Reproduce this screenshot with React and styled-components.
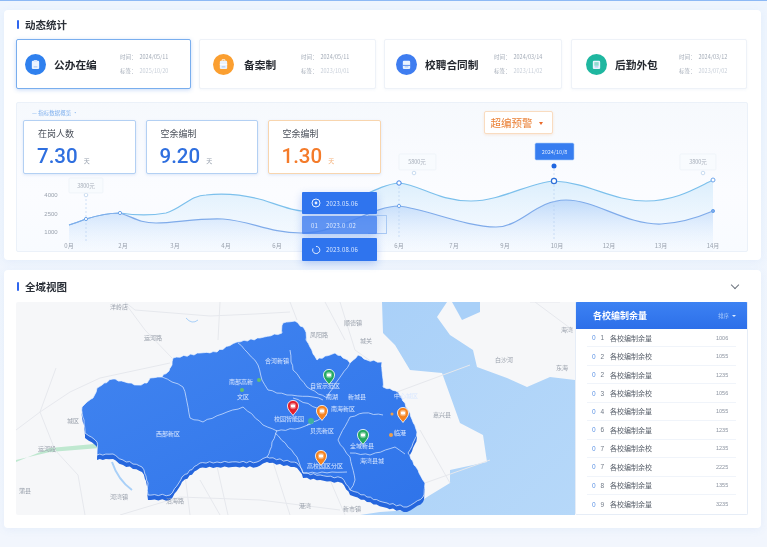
import React from 'react';
import styled, { createGlobalStyle } from 'styled-components';

const GlobalStyle = createGlobalStyle`
  html, body { margin: 0; padding: 0; background: #eff5fd; }
  body { font-family: "Noto Sans CJK SC", "Liberation Sans", sans-serif; color: #262b33; }
`;

const Page = styled.div`
  width: 767px;
  height: 547px;
  box-sizing: border-box;
  overflow: hidden;
  padding: 9px 6px 0 4px;
  border-top: 1px solid #8db9f5;
  background: linear-gradient(180deg, #eef5fe, #f2f6fd);
  display: flex;
  flex-direction: column;
  gap: 10px;
  filter: blur(0.3px);
`;

const Card = styled.section`
  position: relative;
  box-sizing: border-box;
  height: ${p => p.$height}px;
  background: #fff;
  border-radius: 4px;
  padding: 0 13px 0 12px;
  box-shadow: 0 2px 8px rgba(90, 140, 220, 0.08);
`;

const TitleRow = styled.div`
  height: ${p => p.$height}px;
  display: flex;
  align-items: center;
  justify-content: space-between;
  padding-left: 1px;
`;

const Title = styled.h2`
  margin: 0;
  font-size: 10.5px;
  font-weight: 700;
  color: #2b3038;
  display: flex;
  align-items: center;
  gap: 6px;
  &::before {
    content: '';
    width: 2px;
    height: 9px;
    background: #2f66ee;
    border-radius: 1px;
  }
`;

const Tabs = styled.div`
  display: grid;
  grid-template-columns: 175px 177px 178px 177px;
  column-gap: 8px;
  & > :last-child { margin-left: 1px; }
`;

const Tab = styled.div`
  box-sizing: border-box;
  height: 50px;
  display: flex;
  align-items: center;
  padding-left: ${p => p.$pad}px;
  background: #fff;
  border-radius: 2px;
  border: 1px solid ${p => (p.$active ? '#79aeee' : '#eef2f8')};
  box-shadow: ${p => (p.$active ? '0 1px 4px rgba(70,130,230,.3)' : '0 1px 3px rgba(120,150,200,.08)')};
`;

const TabIcon = styled.span`
  flex: none;
  width: 21px;
  height: 21px;
  border-radius: 50%;
  background: ${p => p.$color};
  display: flex;
  align-items: center;
  justify-content: center;
`;

const TabName = styled.span`
  margin-left: ${p => p.$gap}px;
  font-size: 10.7px;
  font-weight: 700;
  color: #24282f;
  white-space: nowrap;
  width: ${p => p.$width}px;
`;

const TabMeta = styled.div`
  display: flex;
  flex-direction: column;
  gap: 8px;
  font-size: 5.5px;
  line-height: 6px;
  color: #a4acb8;
  white-space: nowrap;
  span:last-child { color: #c9d0da; }
  b { font-weight: 400; color: #a4acb8; margin-right: 3px; }
`;

const ChartPanel = styled.div`
  position: relative;
  box-sizing: border-box;
  height: 150px;
  margin-top: 13px;
  padding: 6px 6px 0;
  border: 1px solid #ebf1f9;
  border-radius: 2px;
  background: linear-gradient(180deg, #f6f9fd, #fbfcff 60%, #f8fbff);
`;

const ChartTop = styled.div`
  position: relative;
  z-index: 1;
  display: flex;
  align-items: flex-start;
`;

const Caption = styled.div`
  height: 11px;
  padding-left: 9px;
  font-size: 5.5px;
  line-height: 9px;
  color: #7fb0ee;
  white-space: nowrap;
`;

const Stats = styled.div`
  display: flex;
  gap: 9.5px;
`;

const Stat = styled.div`
  box-sizing: border-box;
  width: ${p => p.$width}px;
  height: 54px;
  padding: 6px 0 0 14px;
  background: #fff;
  border-radius: 2px;
  border: 1px solid ${p => (p.$warn ? '#f8d5ae' : '#b3d0f3')};
  box-shadow: 0 1px 3px rgba(90, 140, 220, 0.18);
`;

const StatLabel = styled.div`
  font-size: 9px;
  line-height: 14px;
  color: #4b515b;
`;

const StatValue = styled.div`
  margin-top: 3px;
  margin-left: -1px;
  font-family: Roboto, "Liberation Sans", sans-serif;
  font-size: 20.5px;
  line-height: 24px;
  font-weight: 500;
  color: ${p => (p.$warn ? '#f47b2a' : '#2f6fdf')};
  small {
    font-family: "Noto Sans CJK SC", sans-serif;
    font-size: 6px;
    font-weight: 400;
    margin-left: 6px;
    color: ${p => (p.$warn ? '#f4b37e' : '#9aa3b0')};
  }
`;

const WarnButton = styled.div`
  box-sizing: border-box;
  width: 69px;
  height: 23px;
  margin: 2px 0 0 103px;
  display: flex;
  align-items: center;
  justify-content: space-between;
  padding: 0 9px 0 6px;
  background: #fff;
  border: 1px solid #f9dcc0;
  border-radius: 2px;
  box-shadow: 0 1px 3px rgba(240, 160, 90, 0.2);
  font-size: 10.5px;
  color: #ea8036;
  white-space: nowrap;
  &::after {
    content: '';
    border: 2.5px solid transparent;
    border-top: 3px solid #ea6a2a;
    margin-top: 3px;
  }
`;

const ChartSvg = styled.svg`
  position: absolute;
  left: 0;
  top: 0;
  width: 732px;
  height: 150px;
`;

const TimeStack = styled.div`
  position: absolute;
  z-index: 2;
  left: 285px;
  top: 89px;
  width: 75px;
  display: flex;
  flex-direction: column;
`;

const TimeRow = styled.div`
  box-sizing: border-box;
  height: ${p => p.$height}px;
  margin-top: ${p => p.$gap}px;
  display: flex;
  align-items: center;
  padding-left: 9px;
  border-radius: 1px;
  background: ${p => (p.$light ? 'rgba(70, 130, 240, 0.85)' : '#2f74ee')};
  box-shadow: 0 3px 8px rgba(50, 110, 230, 0.3);
  color: #dce9ff;
  font-size: 6px;
  letter-spacing: 0.2px;
  white-space: nowrap;
`;

const TimeIcon = styled.span`
  width: 15px;
  flex: none;
  display: flex;
  align-items: center;
`;

const GhostBox = styled.div`
  position: absolute;
  z-index: 1;
  left: 351px;
  top: 112px;
  width: 19px;
  height: 19px;
  box-sizing: border-box;
  border: 1px solid #a9c9f3;
  border-left: 0;
`;

const MapRow = styled.div`
  display: flex;
  height: 213px;
`;

const MapBox = styled.div`
  width: 559px;
  flex: none;
  background: #f6f7f9;
  border-radius: 2px 0 0 2px;
  overflow: hidden;
`;

const MapSvg = styled.svg`
  display: block;
  width: 559px;
  height: 213px;
`;

const ListPanel = styled.div`
  flex: 1;
  border: 1px solid #e6edf7;
  border-top: 0;
  border-radius: 0 0 2px 2px;
  background: #fff;
  overflow: hidden;
`;

const ListHead = styled.div`
  height: 27px;
  margin: 0 -1px;
  display: flex;
  align-items: center;
  justify-content: space-between;
  padding: 0 12px 0 18px;
  background: linear-gradient(180deg, #3c82f3, #2d6fe9);
  border-radius: 2px 2px 0 0;
  color: #fff;
  font-size: 9px;
  font-weight: 700;
  span {
    display: flex;
    align-items: center;
    gap: 3px;
    font-size: 5.5px;
    font-weight: 400;
    color: #a9cbfb;
  }
  span::after {
    content: '';
    border: 2px solid transparent;
    border-top: 2.5px solid #dcebff;
    margin-top: 2px;
  }
`;

const ListRow = styled.div`
  box-sizing: border-box;
  height: 18.45px;
  margin: 0 11px;
  display: flex;
  align-items: center;
  border-bottom: 1px solid #f0f4fa;
  &:last-child { border-bottom: 0; }
`;

const RowIndex = styled.span`
  width: 23px;
  padding-left: 5px;
  box-sizing: border-box;
  font-family: "Liberation Sans", sans-serif;
  font-size: 6.5px;
  letter-spacing: 1.5px;
  color: #6f7885;
  b { font-weight: 400; color: #5c92e4; }
`;

const RowName = styled.span`
  flex: 1;
  font-size: 7px;
  color: #555c67;
`;

const RowValue = styled.span`
  width: 20px;
  font-family: "Liberation Sans", sans-serif;
  font-size: 5.5px;
  color: #8b93a0;
`;

const Chevron = styled.span`
  width: 5px;
  height: 5px;
  margin: -3px 10px 0 0;
  border-right: 1.2px solid #6d747f;
  border-bottom: 1.2px solid #6d747f;
  transform: rotate(45deg);
`;

const tabs = [
  { name: '公办在编', color: '#2f80ee', pad: 8, gap: 8, width: 66, time: '2024/05/11', date: '2025/10/20', glyph: 'clip' },
  { name: '备案制', color: '#fb9f30', pad: 13, gap: 10, width: 57, time: '2024/05/11', date: '2023/10/01', glyph: 'case' },
  { name: '校聘合同制', color: '#3f7df0', pad: 11, gap: 8, width: 69, time: '2024/03/14', date: '2023/11/02', glyph: 'card' },
  { name: '后勤外包', color: '#1fb7a0', pad: 14, gap: 8, width: 64, time: '2024/03/12', date: '2023/07/02', glyph: 'book' },
];

const stats = [
  { label: '在岗人数', value: '7.30', width: 113 },
  { label: '空余编制', value: '9.20', width: 112.5 },
  { label: '空余编制', value: '1.30', width: 113, warn: true },
];

const months = [
  ['0月', 68], ['2月', 122], ['3月', 174], ['4月', 225], ['6月', 276], ['6月', 398],
  ['7月', 453], ['9月', 504], ['10月', 556], ['12月', 608], ['13月', 660], ['14月', 712],
];

const rows = [
  ['0', '1', '各校编制余量', '1006'], ['0', '2', '各校编制余校', '1055'], ['0', '2', '各校编制余量', '1235'],
  ['0', '3', '各校编制余校', '1056'], ['0', '4', '各校编制余量', '1055'], ['0', '6', '各校编制余量', '1235'],
  ['0', '7', '各校编制余校', '1235'], ['0', '7', '各校编制余校', '2225'], ['0', '8', '各校编制余量', '1355'],
  ['0', '9', '各校编制余量', '3235'],
];

const UPPER = 'M68 224 C78 221 84 218 85 218 C98 214 108 212 119 212 C132 214 148 215 165 212 C180 208 190 194 205 194 C222 192 240 193 262 199 C280 205 292 210 302 210 C340 215 370 184 398 182 C420 184 436 200 470 200 C500 200 530 181 553 180 C590 182 610 200 645 200 C675 200 695 187 712 179';
const LOWER = 'M68 224 C78 221 84 218 85 218 C98 214 108 212 119 212 C132 216 138 222 155 222 C175 222 195 217 222 218 C250 220 268 232 300 232 C340 232 370 205 398 205 C425 208 465 226 495 226 C520 226 535 199 565 199 C595 199 625 224 660 223 C680 222 698 216 712 210';
const LAND = [
  82, 407, 87, 402, 93, 398, 97, 388, 102, 385, 113, 379, 125, 382, 137, 385, 147, 383, 150, 378, 162, 377, 169, 371,
  172, 365, 173, 358, 200, 353, 217, 352, 237, 342, 260, 338, 282, 333, 283, 323, 295, 321, 305, 330, 306, 340, 310, 347,
  317, 360, 335, 353, 343, 358, 350, 363, 358, 355, 367, 360, 382, 362, 383, 387, 398, 392, 405, 403, 410, 413, 417, 432,
  413, 443, 408, 453, 418, 470, 425, 483, 423, 497, 407, 507, 387, 503, 367, 497, 350, 490, 342, 478, 303, 473, 297, 463,
  267, 457, 257, 462, 217, 462, 200, 463, 182, 477, 170, 495, 148, 495, 148, 483, 142, 467, 123, 460, 113, 454, 97, 455,
  97, 442, 85, 433, 84, 420, 82, 407,
];
const SEA = 'M382 302 L447 302 L437 317 L450 335 L473 350 L477 367 L507 378 L527 387 L550 377 L575 380 L575 515 L360 515 L380 512 L410 510 L427 497 L450 483 L450 470 L487 462 L483 435 L460 423 L442 373 L410 370 L395 345 L383 333 Z';
const BORDERS = [
  [162, 377, 172, 382, 183, 387, 187, 402, 190, 418, 203, 422, 227, 412, 243, 407, 263, 425, 277, 431, 300, 428, 313, 423],
  [238, 343, 247, 352, 258, 365, 262, 380, 268, 390, 287, 395, 313, 397, 323, 400],
  [277, 430, 272, 442, 270, 450, 267, 457],
  [290, 350, 291, 362, 293, 370, 307, 387, 327, 398, 338, 380, 350, 363],
  [293, 398, 317, 408],
  [383, 415, 363, 413, 350, 417, 338, 440, 350, 457, 355, 480, 350, 490],
  [350, 453, 370, 455, 395, 447, 405, 454],
  [275, 433, 297, 457, 303, 473, 347, 472],
  [307, 425, 327, 415],
];
const ROADS = [
  'M125 302 L135 310 L210 316 L255 314 L290 312',
  'M16 430 L40 412 L70 392 L100 378 L170 363',
  'M125 303 L145 330 L172 358',
  'M56 368 L40 412 L55 450 L78 475 L85 515',
  'M220 302 L218 340', 'M560 302 L530 302', 'M290 302 L297 320',
  'M200 480 L220 515', 'M216 462 L228 515', 'M273 462 L290 515', 'M330 480 L345 515',
  'M120 515 L180 497 L260 500 L340 510', 'M185 475 L190 515',
  'M340 302 L355 350 L372 362', 'M325 302 L345 340', 'M397 392 L470 365', 'M425 483 L490 460', 'M420 430 L450 483',
  'M535 302 L570 328',
];
const GREY_LABELS = [
  ['洋岭店', 119, 309], ['运河路', 153, 340], ['城区', 73, 423], ['运河段', 47, 451], ['蒲县', 25, 493], ['河湾镇', 119, 499],
  ['顺德镇', 353, 325], ['城关', 366, 343], ['凤阳路', 319, 337], ['白沙河', 504, 362], ['嘉兴县', 442, 417],
  ['东海', 562, 370], ['海湾', 567, 332], ['港湾', 305, 508], ['新市镇', 352, 511], ['沿海路', 175, 503],
];
const WHITE_LABELS = [
  ['合河新镇', 277, 363], ['南部高新', 241, 384], ['文区', 243, 399], ['西部新区', 168, 436], ['校园智能园', 289, 421],
  ['自贸示范区', 325, 388], ['南湖', 332, 399], ['新城县', 357, 399], ['南海新区', 343, 411], ['贝壳新区', 322, 433],
  ['全域新县', 362, 448], ['海湾县城', 372, 463], ['高校园区分区', 325, 468], ['临港', 400, 435], ['中心城区', 406, 398],
];
const PINS = [
  { x: 293, y: 406, color: '#e3202c' }, { x: 322, y: 411, color: '#f5821e' }, { x: 329, y: 375, color: '#23a860' },
  { x: 403, y: 413, color: '#f5821e' }, { x: 363, y: 435, color: '#23a860' }, { x: 321, y: 456, color: '#f5821e' },
];

// breaks the long straight segments up so coastlines look hand traced
function roughen(points, step, amp) {
  let d = `M${points[0]} ${points[1]}`;
  let seed = 1;
  for (let i = 2; i < points.length; i += 2) {
    const [x0, y0, x1, y1] = [points[i - 2], points[i - 1], points[i], points[i + 1]];
    const parts = Math.max(1, Math.round(Math.hypot(x1 - x0, y1 - y0) / step));
    for (let k = 1; k <= parts; k++) {
      seed += 1;
      const wobble = k === parts ? 0 : amp;
      const x = x0 + ((x1 - x0) * k) / parts + Math.sin(seed * 12.9) * wobble;
      const y = y0 + ((y1 - y0) * k) / parts + Math.sin(seed * 78.2) * wobble;
      d += ` L${x.toFixed(1)} ${y.toFixed(1)}`;
    }
  }
  return d;
}

const LAND_PATH = roughen(LAND, 3.5, 0.8) + ' Z';

function TabGlyph({ kind }) {
  return (
    <svg width="11" height="11" viewBox="0 0 12 12">
      <rect x="2" y="2" width="8" height="9" rx="1.2" fill="#eaf3ff" />
      {kind === 'clip' && <rect x="4.2" y="1" width="3.6" height="2" rx=".6" fill="#cfe2ff" />}
      {kind === 'case' && <path d="M4.5 2V.8h3V2M2 6h8" stroke="#fff" fill="none" strokeWidth=".9" />}
      {kind === 'card' && <path d="M2 7h8" stroke={'#3f7df0'} strokeWidth=".9" />}
      {kind === 'book' && <rect x="3.6" y="3.4" width="4.8" height="4" fill="#8fdcd0" />}
      <path d="M4 8.6h4" stroke="#8db4ea" strokeWidth=".8" />
    </svg>
  );
}

function Pin({ x, y, color }) {
  return (
    <g transform={`translate(${x} ${y})`}>
      <path d="M0 9.5C-1.5 7-5.6 4-5.6 0A5.6 5.6 0 0 1 5.6 0C5.6 4 1.5 7 0 9.5Z" fill={color} stroke="#fff" strokeWidth=".8" />
      <circle r="3.2" fill="#fff" opacity=".35" />
      <rect x="-2" y="-1.5" width="4" height="3" rx=".8" fill="#fff" />
    </g>
  );
}

function Trend() {
  return (
    <ChartSvg viewBox="16 102 732 150">
      <defs>
        <linearGradient id="upperFill" x1="0" y1="0" x2="0" y2="1">
          <stop offset="0" stopColor="#bfe2fa" stopOpacity=".55" />
          <stop offset="1" stopColor="#e6f3fe" stopOpacity=".1" />
        </linearGradient>
        <linearGradient id="lowerFill" x1="0" y1="0" x2="0" y2="1">
          <stop offset="0" stopColor="#a8cbf8" stopOpacity=".65" />
          <stop offset="1" stopColor="#e8f1fe" stopOpacity=".05" />
        </linearGradient>
      </defs>
      <path d={`${UPPER} L712 250 L68 250 Z`} fill="url(#upperFill)" />
      <path d={`${LOWER} L712 250 L68 250 Z`} fill="url(#lowerFill)" />
      <path d={UPPER} fill="none" stroke="#7cc0ec" strokeWidth="1.2" />
      <path d={LOWER} fill="none" stroke="#7fabea" strokeWidth="1.2" />
      <g stroke="#b3cdf0" strokeWidth=".6" strokeDasharray="2 2">
        <path d="M85 198V240" />
        <path d="M398 182V238" />
        <path d="M553 168V238" />
      </g>
      <g fill="#fff" stroke="#6ea6ec">
        <circle cx="85" cy="218" r="1.6" />
        <circle cx="119" cy="212" r="1.6" />
        <circle cx="398" cy="182" r="2.2" strokeWidth="1" stroke="#3f82e8" />
        <circle cx="398" cy="205" r="1.6" />
        <circle cx="553" cy="180" r="2.6" strokeWidth="1.2" stroke="#2d6fd8" />
        <circle cx="712" cy="179" r="2" />
        <circle cx="712" cy="210" r="1.6" fill="#7fabea" />
        <g stroke="#bcd3ec" strokeWidth=".8">
          <circle cx="85" cy="194" r="1.8" />
          <circle cx="413" cy="172" r="1.8" />
          <circle cx="702" cy="172" r="1.8" />
        </g>
      </g>
      <circle cx="553" cy="165" r="2.5" fill="#1f66e0" />
      <g fill="#f8fbfe" stroke="#edf2f8" strokeWidth=".7">
        <rect x="68" y="177" width="34" height="15" rx="1" />
        <rect x="398" y="153" width="37" height="16" rx="1" />
        <rect x="679" y="153" width="36" height="16" rx="1" />
      </g>
      <g fontSize="5.5" fill="#a7afba" textAnchor="middle">
        <text x="85" y="187">3800元</text>
        <text x="416" y="163">5800元</text>
        <text x="697" y="163">3800元</text>
      </g>
      <rect x="534" y="142" width="39" height="17" rx="1.5" fill="#377df0" stroke="#a9ccf8" strokeWidth=".6" />
      <text x="553.5" y="153" fontSize="5.5" fill="#dce9ff" textAnchor="middle">2024/10/8</text>
      <g fontSize="6" fill="#9aa2ae" textAnchor="middle" fontFamily="Liberation Sans, sans-serif">
        <text x="50" y="196">4000</text>
        <text x="50" y="215">2500</text>
        <text x="50" y="233">1000</text>
      </g>
      <g fontSize="6" fill="#9aa2ae" textAnchor="middle">
        {months.map(([label, x]) => <text key={x} x={x} y="247">{label}</text>)}
      </g>
    </ChartSvg>
  );
}

function RegionMap() {
  return (
    <MapSvg viewBox="16 302 559 213">
      <defs>
        <linearGradient id="seaFill" x1="0" y1="0" x2="1" y2="1">
          <stop offset="0" stopColor="#a9d0f8" />
          <stop offset="1" stopColor="#b6d8f9" />
        </linearGradient>
        <linearGradient id="landFill" x1="0" y1="0" x2="1" y2="1">
          <stop offset="0" stopColor="#4285f0" />
          <stop offset="1" stopColor="#2f74ea" />
        </linearGradient>
      </defs>
      <path d={SEA} fill="url(#seaFill)" />
      <path d="M452 302 L480 302 L480 312 L462 320 Z" fill="#a9d0f8" />
      <path d="M16 462 L50 448 L105 443 L100 448 L50 452 L16 460 Z" fill="#bfe8d0" />
      <path d="M112 462 Q118 480 132 490" fill="none" stroke="#a9d0f8" strokeWidth="2" />
      <path d="M186 318 Q192 325 198 320" fill="none" stroke="#a9d0f8" strokeWidth="1" />
      <g fill="none" stroke="#e6e8ed" strokeWidth="1">
        {ROADS.map(d => <path key={d} d={d} />)}
      </g>
      <path d={LAND_PATH} fill="#2566dd" transform="translate(0 5)" />
      <path d={LAND_PATH} fill="url(#landFill)" stroke="#eef5ff" strokeWidth=".7" />
      <g fill="none" stroke="#dbe9ff" strokeWidth=".8" opacity=".9">
        {BORDERS.map(points => <path key={points.join()} d={roughen(points, 5, 0.6)} />)}
      </g>
      <g fontSize="6" fill="#9aa1ac" textAnchor="middle">
        {GREY_LABELS.map(([label, x, y]) => <text key={label} x={x} y={y}>{label}</text>)}
      </g>
      <g fontSize="6" fill="#dbe8ff" textAnchor="middle">
        {WHITE_LABELS.map(([label, x, y]) => <text key={label} x={x} y={y}>{label}</text>)}
      </g>
      <circle cx="242" cy="390" r="2" fill="#62c070" />
      <circle cx="259" cy="380" r="2" fill="#62c070" />
      <circle cx="311" cy="421" r="3" fill="#3fb0a0" />
      <circle cx="392" cy="414" r="1.5" fill="#f0a04a" />
      <circle cx="391" cy="435" r="2" fill="#f0a04a" />
      {PINS.map(pin => <Pin key={pin.x + '-' + pin.y} {...pin} />)}
    </MapSvg>
  );
}

function RingIcon({ arc }) {
  return (
    <TimeIcon>
      <svg width="10" height="10" viewBox="0 0 10 10" fill="none" stroke="#e6efff" strokeWidth="1">
        {arc
          ? <path d="M2 3.4A3.6 3.6 0 1 0 5 1.4" />
          : <><circle cx="5" cy="5" r="4" /><circle cx="5" cy="5" r="1.4" fill="#e6efff" stroke="none" /></>}
      </svg>
    </TimeIcon>
  );
}

export default function App() {
  return (
    <Page>
      <GlobalStyle />
      <Card $height={250}>
        <TitleRow $height={29}>
          <Title>动态统计</Title>
        </TitleRow>
        <Tabs>
          {tabs.map((tab, i) => (
            <Tab key={tab.name} $active={i === 0} $pad={tab.pad}>
              <TabIcon $color={tab.color}><TabGlyph kind={tab.glyph} /></TabIcon>
              <TabName $width={tab.width} $gap={tab.gap}>{tab.name}</TabName>
              <TabMeta>
                <span><b>时间：</b>{tab.time}</span>
                <span><b>标签：</b>{tab.date}</span>
              </TabMeta>
            </Tab>
          ))}
        </Tabs>
        <ChartPanel>
          <Trend />
          <ChartTop>
            <div>
              <Caption>— 指标数据概览 •</Caption>
              <Stats>
                {stats.map((stat, i) => (
                  <Stat key={i} $width={stat.width} $warn={stat.warn}>
                    <StatLabel>{stat.label}</StatLabel>
                    <StatValue $warn={stat.warn}>{stat.value}<small>天</small></StatValue>
                  </Stat>
                ))}
              </Stats>
            </div>
            <WarnButton>超编预警</WarnButton>
          </ChartTop>
          <GhostBox />
          <TimeStack>
            <TimeRow $height={22} $gap={0}><RingIcon />2023.05.06</TimeRow>
            <TimeRow $height={18} $gap={2} $light><TimeIcon>01</TimeIcon>2023.0 .02</TimeRow>
            <TimeRow $height={23} $gap={4}><RingIcon arc />2023.08.06</TimeRow>
          </TimeStack>
        </ChartPanel>
      </Card>
      <Card $height={258}>
        <TitleRow $height={32}>
          <Title>全域视图</Title>
          <Chevron />
        </TitleRow>
        <MapRow>
          <MapBox><RegionMap /></MapBox>
          <ListPanel>
            <ListHead>各校编制余量<span>排序</span></ListHead>
            {rows.map(([a, b, name, value], i) => (
              <ListRow key={i}>
                <RowIndex><b>{a}</b> {b}</RowIndex>
                <RowName>{name}</RowName>
                <RowValue>{value}</RowValue>
              </ListRow>
            ))}
          </ListPanel>
        </MapRow>
      </Card>
    </Page>
  );
}
